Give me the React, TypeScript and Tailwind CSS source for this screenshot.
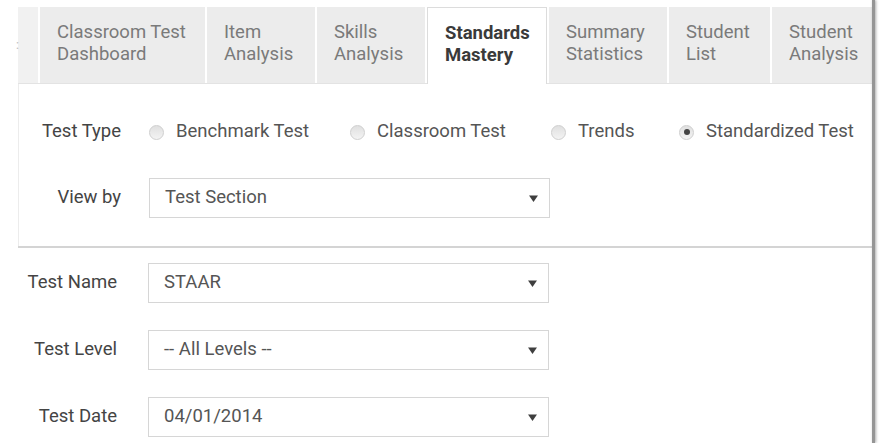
import React from 'react';

type Tab = { label: string[]; width: string; active?: boolean };

const tabs: Tab[] = [
  { label: ['Classroom Test', 'Dashboard'], width: 'w-[165px]' },
  { label: ['Item', 'Analysis'], width: 'w-[108px]' },
  { label: ['Skills', 'Analysis'], width: 'w-[108px]' },
  { label: ['Standards', 'Mastery'], width: 'w-[120px]', active: true },
  { label: ['Summary', 'Statistics'], width: 'w-[118px]' },
  { label: ['Student', 'List'], width: 'w-[101px]' },
  { label: ['Student', 'Analysis'], width: 'flex-1' },
];

const testTypes = [
  { label: 'Benchmark Test', checked: false, width: 'w-[201px]' },
  { label: 'Classroom Test', checked: false, width: 'w-[201px]' },
  { label: 'Trends', checked: false, width: 'w-[128px]' },
  { label: 'Standardized Test', checked: true, width: '' },
];

const filters = [
  ['Test Name', 'STAAR'],
  ['Test Level', '-- All Levels --'],
  ['Test Date', '04/01/2014'],
];

const Arrow = () => (
  <svg width="9" height="7" viewBox="0 0 9 7" className="shrink-0">
    <path d="M0 0.5h9L4.5 7z" fill="#3f3f3f" />
  </svg>
);

const Select = ({ value }: { value: string }) => (
  <div className="w-[401px] h-[40px] border border-[#d6d6d6] bg-white flex items-center justify-between pl-[15px] pr-[11px] text-[18.5px] text-[#555]">
    <span>{value}</span>
    <Arrow />
  </div>
);

const Radio = ({ checked }: { checked: boolean }) => (
  <span className="w-[15px] h-[15px] rounded-full border border-[#cfcfcf] bg-gradient-to-b from-[#e0e0e0] to-[#f3f3f3] flex items-center justify-center shrink-0">
    {checked && <span className="w-[6px] h-[6px] rounded-full bg-[#444]" />}
  </span>
);

export default function App() {
  return (
    <div className="w-[881px] h-[443px] bg-white flex overflow-hidden" style={{ fontFamily: 'Roboto, "Liberation Sans", sans-serif' }}>
      <div className="w-[18px] shrink-0" />

      <div className="w-[854px] shrink-0 flex flex-col">
        {/* tab strip */}
        <div className="mt-[7px] h-[77px] flex gap-[2px] border-b border-[#e3e3e3]">
          <div className="w-[20px] bg-[#f1f1f1] flex items-center">
            <span className="text-[#bbb] text-[12px] leading-none -ml-[2px]">:</span>
          </div>
          {tabs.map((t) => (
            <div
              key={t.label.join(' ')}
              className={`${t.width} pl-[17px] pt-[14px] text-[18.5px] leading-[22px] whitespace-nowrap ${
                t.active
                  ? 'bg-white border border-b-0 border-[#dcdcdc] -mb-px font-bold text-[#3a3a3a]'
                  : 'bg-[#ececec] text-[#7a7a7a]'
              }`}
            >
              {t.label.map((line) => (
                <div key={line}>{line}</div>
              ))}
            </div>
          ))}
        </div>

        {/* test type and view */}
        <div className="border-l border-[#ececec] pt-[33px] pb-[28px] flex flex-col gap-[31px]">
          <div className="flex items-center h-[30px]">
            <div className="w-[102px] text-right text-[18.5px] text-[#444]">Test Type</div>
            <div className="ml-[28px] flex items-center">
              {testTypes.map((r) => (
                <label key={r.label} className={`${r.width} flex items-center gap-[12px] text-[18.5px] text-[#555] whitespace-nowrap`}>
                  <Radio checked={r.checked} />
                  {r.label}
                </label>
              ))}
            </div>
          </div>
          <div className="flex items-center">
            <div className="w-[102px] text-right text-[18.5px] text-[#444]">View by</div>
            <div className="ml-[28px]">
              <Select value="Test Section" />
            </div>
          </div>
        </div>

        <div className="h-[2px] bg-[#d4d4d4]" />

        {/* test filters */}
        <div className="pt-[15px] flex flex-col gap-[27px]">
          {filters.map(([label, value]) => (
            <div key={label} className="flex items-center">
              <div className="w-[99px] text-right text-[18.5px] text-[#444]">{label}</div>
              <div className="ml-[31px]">
                <Select value={value} />
              </div>
            </div>
          ))}
        </div>
      </div>

      <div className="w-[3px] shrink-0 bg-[#959595] shadow-[1px_0_3px_rgba(0,0,0,0.35)]" />
    </div>
  );
}
